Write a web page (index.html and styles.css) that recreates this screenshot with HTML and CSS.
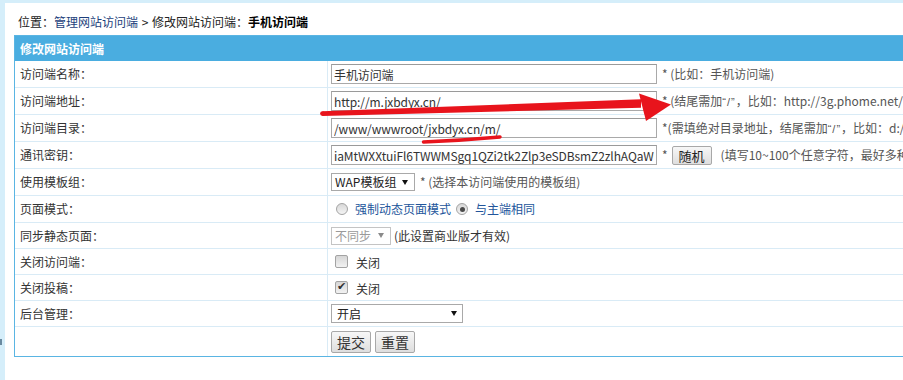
FILE: index.html
```html
<!DOCTYPE html>
<html lang="zh-CN">
<head>
<meta charset="utf-8">
<title>修改网站访问端</title>
<link rel="stylesheet" href="styles.css">
</head>
<body>
<div class="page">
  <div class="crumb">位置：<a class="link" href="#">管理网站访问端</a> &gt; 修改网站访问端：<b>手机访问端</b></div>
  <div class="panel">
    <div class="panel-head">修改网站访问端</div>

    <div class="row tall">
      <div class="label">访问端名称：</div>
      <div class="field"><input class="text" value="手机访问端"><span class="hint">* (比如：手机访问端)</span></div>
    </div>

    <div class="row tall">
      <div class="label">访问端地址：</div>
      <div class="field"><input class="text" value="http://m.jxbdyx.cn/"><span class="hint">* (结尾需加<span class="q">“/”</span>，比如：http://3g.phome.net/)</span></div>
    </div>

    <div class="row tall">
      <div class="label">访问端目录：</div>
      <div class="field"><input class="text" value="/www/wwwroot/jxbdyx.cn/m/"><span class="hint">*(需填绝对目录地址，结尾需加<span class="q">“/”</span>，比如：d:/wwwroot/3g/)</span></div>
    </div>

    <div class="row tall">
      <div class="label">通讯密钥：</div>
      <div class="field"><input class="text" value="iaMtWXXtuiFl6TWWMSgq1QZi2tk2Zlp3eSDBsmZ2zlhAQaWGF"><span class="hint star">*</span><button class="btn small" type="button">随机</button><span class="hint">(填写10~100个任意字符，最好多种字符组合)</span></div>
    </div>

    <div class="row tall">
      <div class="label">使用模板组：</div>
      <div class="field"><span class="select tpl"><span>WAP模板组</span><svg class="arrow" width="6" height="5" viewBox="0 0 6 5"><polygon points="0,0 6,0 3,5"/></svg></span><span class="hint">* (选择本访问端使用的模板组)</span></div>
    </div>

    <div class="row tall">
      <div class="label">页面模式：</div>
      <div class="field"><input class="radio" type="radio" name="mode"><span class="opt">强制动态页面模式</span><input class="radio" type="radio" name="mode" checked><span class="opt">与主端相同</span></div>
    </div>

    <div class="row">
      <div class="label">同步静态页面：</div>
      <div class="field"><span class="select sync disabled"><span>不同步</span><svg class="arrow" width="6" height="5" viewBox="0 0 6 5"><polygon points="0,0 6,0 3,5"/></svg></span><span class="hint dark">(此设置商业版才有效)</span></div>
    </div>

    <div class="row">
      <div class="label">关闭访问端：</div>
      <div class="field"><input class="check" type="checkbox"><span class="opt plain">关闭</span></div>
    </div>

    <div class="row">
      <div class="label">关闭投稿：</div>
      <div class="field"><input class="check" type="checkbox" checked><span class="opt plain">关闭</span></div>
    </div>

    <div class="row">
      <div class="label">后台管理：</div>
      <div class="field"><span class="select admin"><span>开启</span><svg class="arrow" width="6" height="5" viewBox="0 0 6 5"><polygon points="0,0 6,0 3,5"/></svg></span></div>
    </div>

    <div class="row last">
      <div class="label"></div>
      <div class="field"><button class="btn big" type="submit">提交</button><button class="btn big" type="reset">重置</button></div>
    </div>
  </div>
</div>
<svg class="marks" width="903" height="380" viewBox="0 0 903 380">
  <circle cx="322.5" cy="113.6" r="2.4" fill="#e8141c"/>
  <polygon points="322.5,111.2 641,99.2 641,107.8 322.5,116" fill="#e8141c"/>
  <polygon points="639,93.5 671,104.5 646,121" fill="#e8141c"/>
  <path d="M423.5 142 Q462 140.5 500 137" stroke="#e8141c" stroke-width="3.5" fill="none" stroke-linecap="round"/>
  <rect x="0" y="339" width="2" height="6" fill="#6a8aa0"/>
</svg>
</body>
</html>
```

FILE: styles.css
```css
html {
  margin: 0;
  overflow: hidden;
}

body {
  margin: 0;
  height: 377px;
  background: #fff;
  border-top: 3px solid #d5eefa;
  border-left: 5px solid #d5eefa;
  font-family: "Noto Sans CJK SC", "Noto Sans", sans-serif;
  font-size: 12px;
  line-height: 20px;
  color: #333;
  overflow: hidden;
}

.page {
  padding: 9px 0 0 9px;
  overflow: hidden;
}

.crumb {
  height: 20px;
  padding-left: 4px;
  margin-bottom: 3px;
  white-space: nowrap;
  color: #222;
  word-spacing: 1px;
}

.crumb .link {
  color: #1d3f7c;
  text-decoration: none;
}

.crumb b {
  color: #000;
}

.panel {
  width: 1000px;
  border: 1px solid #5ab5e3;
  white-space: nowrap;
}

.panel-head {
  height: 25px;
  line-height: 25px;
  padding-left: 5px;
  background: #4aade0;
  color: #fff;
  font-weight: bold;
}

.row {
  display: grid;
  grid-template-columns: 313px 1fr;
  height: 26px;
  box-sizing: border-box;
  border-bottom: 1px solid #d9ebf6;
}

.row.tall {
  height: 27px;
}

.row.last {
  height: 29px;
  border-bottom: 0;
}

.label {
  display: flex;
  align-items: center;
  padding-left: 5px;
  border-right: 1px solid #d9ebf6;
  color: #333;
}

.field {
  display: flex;
  align-items: center;
  padding-left: 3px;
}

.text {
  box-sizing: border-box;
  width: 326px;
  height: 20px;
  margin: 0;
  padding: 0 2px;
  border: 1px solid #a9a9a9;
  border-top-color: #9a9a9a;
  font: inherit;
  line-height: 18px;
  letter-spacing: -0.1px;
  color: #333;
  background: #fff;
  outline: none;
}

.hint {
  margin-left: 5px;
  color: #555;
}

.hint .q {
  font-family: "Liberation Sans", sans-serif;
  font-size: 11px;
  letter-spacing: 1px;
}

.hint.dark {
  margin-left: 3px;
  color: #333;
}

.hint.star {
  margin-right: 4px;
}

.btn {
  box-sizing: border-box;
  margin: 0;
  padding: 0;
  border: 1px solid #a8a8a8;
  border-radius: 2px;
  background: linear-gradient(#f7f7f7, #dedede);
  font-family: inherit;
  color: #222;
  cursor: pointer;
}

.btn.small {
  width: 40px;
  height: 19px;
  font-size: 13px;
  line-height: 17px;
  margin-right: 4px;
}

.btn.big {
  width: 40px;
  height: 22px;
  font-size: 14px;
  line-height: 20px;
  margin-right: 4px;
  color: #333;
}

.select {
  box-sizing: border-box;
  display: inline-flex;
  align-items: center;
  justify-content: space-between;
  height: 18px;
  padding: 0 6px 0 3px;
  border: 1px solid #a9a9a9;
  background: #fff;
  color: #222;
  line-height: 16px;
}

.select .arrow {
  fill: #111;
}

.select.tpl {
  width: 84px;
}

.select.sync {
  width: 60px;
}

.select.admin {
  width: 132px;
  height: 19px;
  padding-left: 5px;
  padding-right: 5px;
}

.select.disabled {
  color: #9a9a9a;
  border-color: #c4c4c4;
}

.select.disabled .arrow {
  fill: #8a8a8a;
}

.radio {
  appearance: none;
  box-sizing: border-box;
  width: 12px;
  height: 12px;
  margin: 0 4px 0 5px;
  border: 1px solid #a3a3a3;
  border-radius: 50%;
  background: linear-gradient(#d8d8d8, #f4f4f4);
  position: relative;
}

.radio:checked::after {
  content: "";
  position: absolute;
  left: 2.5px;
  top: 2.5px;
  width: 5px;
  height: 5px;
  border-radius: 50%;
  background: #4a4a4a;
}

.opt {
  color: #22559b;
  margin-left: 3px;
}

.opt.plain {
  color: #333;
  margin-left: 5px;
  padding-top: 3px;
}

.check {
  appearance: none;
  box-sizing: border-box;
  width: 13px;
  height: 13px;
  margin: 0 3px 0 4px;
  border: 1px solid #a3a3a3;
  border-radius: 2px;
  background: linear-gradient(#d6d6d6, #f2f2f2);
  position: relative;
}

.check:checked::after {
  content: "✔";
  position: absolute;
  left: 1px;
  top: -4px;
  font-size: 11px;
  line-height: 18px;
  color: #333;
  font-family: "DejaVu Sans", sans-serif;
}

.marks {
  position: absolute;
  top: 0;
  left: 0;
  pointer-events: none;
}
```
